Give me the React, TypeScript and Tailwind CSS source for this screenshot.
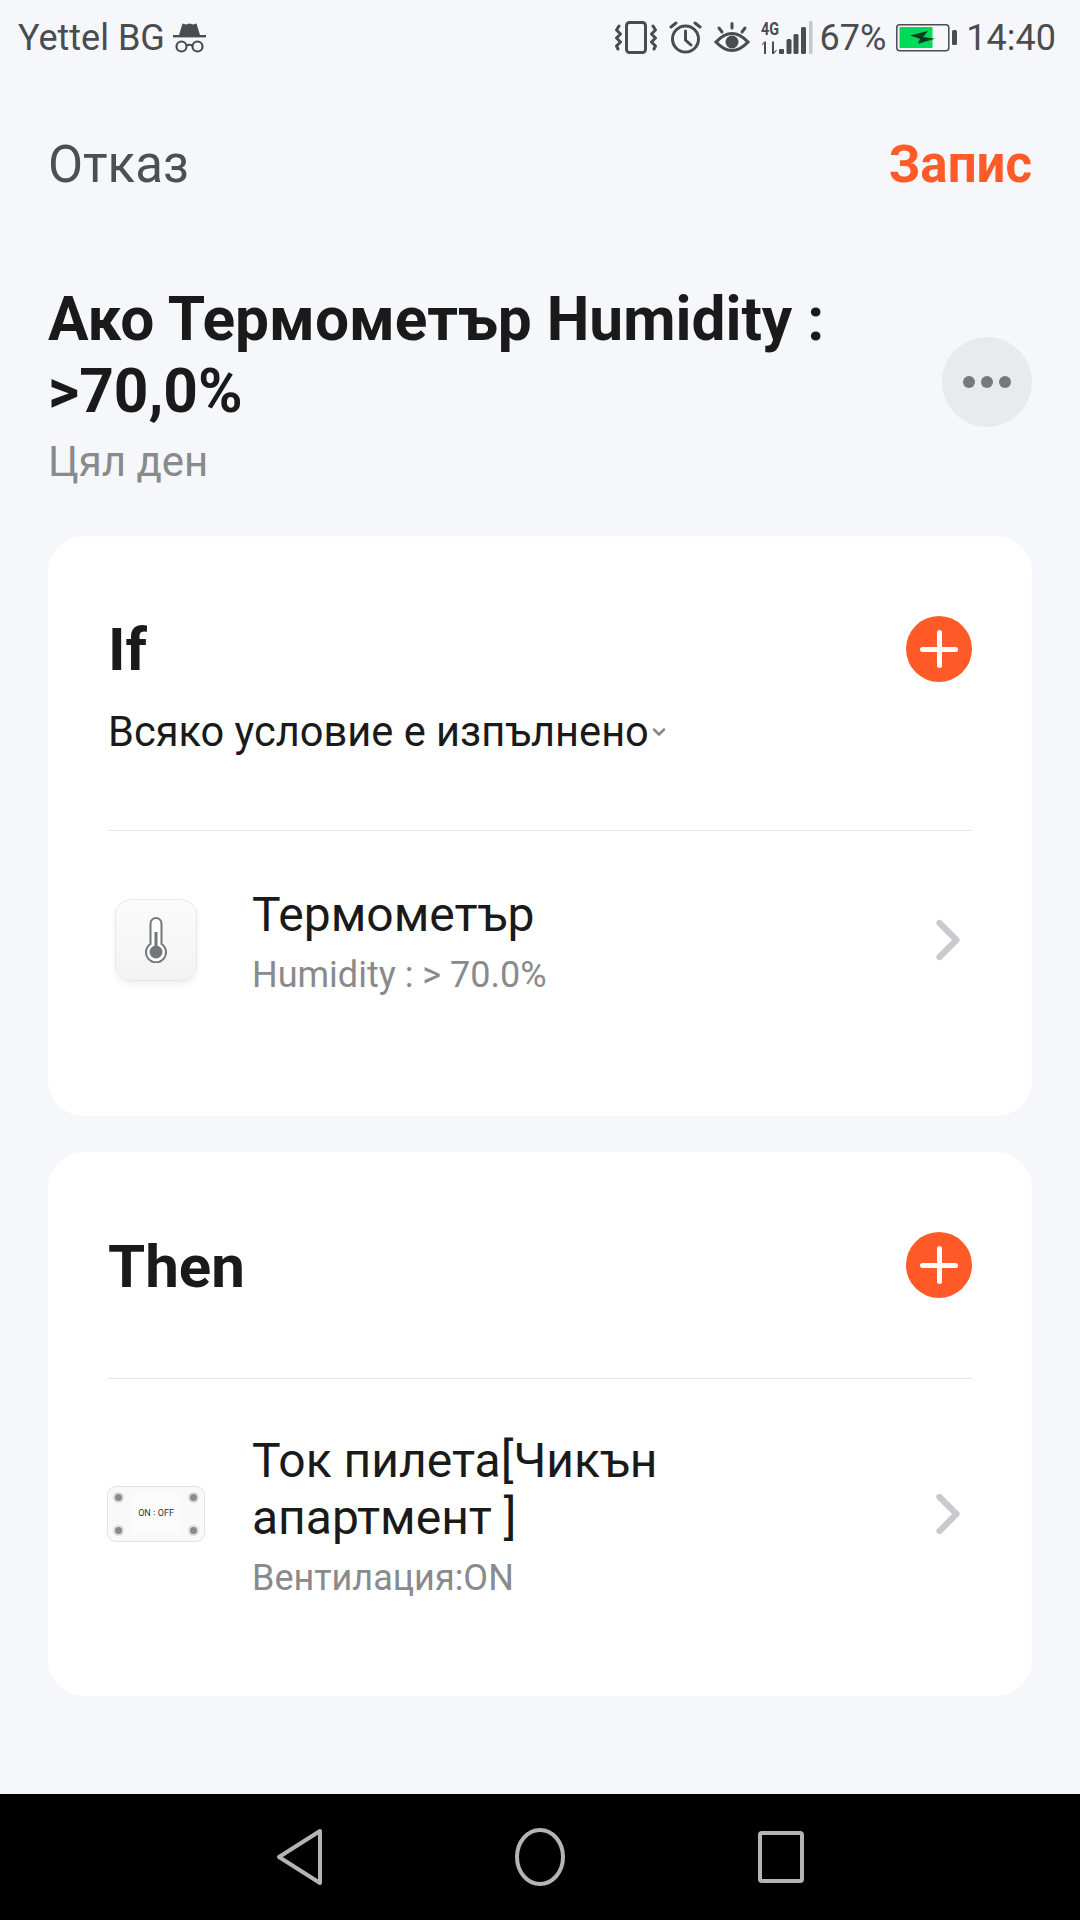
import { ChevronDown, ChevronRight } from "lucide-react";

const font = { fontFamily: "Roboto, sans-serif" };

function IncognitoIcon() {
  return (
    <svg width="33" height="31" viewBox="0 0 33 31" fill="none" className="text-[#4a4c50]">
      <path d="M6 13 L9.500 1.500 L13 2.500 L16.500 1.500 L20 2.500 L23.500 1.500 L27 13 Z" fill="currentColor" />
      <rect x="0" y="13" width="33" height="2.400" fill="currentColor" />
      <circle cx="8.500" cy="24.500" r="5" stroke="currentColor" strokeWidth="2.200" />
      <circle cx="24.500" cy="24.500" r="5" stroke="currentColor" strokeWidth="2.200" />
      <path d="M13.500 23.500 Q16.500 22 19.500 23.500" stroke="currentColor" strokeWidth="2" />
    </svg>
  );
}

function VibrateIcon() {
  return (
    <svg width="42" height="33" viewBox="0 0 42 33" fill="none" stroke="#4a4c50" strokeWidth="3" strokeLinecap="round" strokeLinejoin="round">
      <rect x="11.500" y="1.500" width="19" height="30" rx="3" />
      <path d="M4 5 L1.500 9 L5.500 13 L1.500 17 L5.500 21 L1.500 25 L3 28" />
      <path d="M38 5 L40.500 9 L36.500 13 L40.500 17 L36.500 21 L40.500 25 L39 28" />
    </svg>
  );
}

function AlarmIcon() {
  return (
    <svg width="33" height="33" viewBox="0 0 33 33" fill="none" stroke="#4a4c50" strokeWidth="3" strokeLinecap="round">
      <circle cx="16.500" cy="18" r="13" />
      <path d="M16.500 10 V19 L22 24" />
      <path d="M2 6 L7 2 M31 6 L26 2" />
    </svg>
  );
}

function EyeIcon() {
  return (
    <svg width="36" height="32" viewBox="0 0 36 32" fill="none" stroke="#4a4c50" strokeWidth="3" strokeLinecap="round">
      <path d="M2 20 Q18 3 34 20 Q18 37 2 20 Z" strokeWidth="3.200" />
      <circle cx="18" cy="20" r="6.500" fill="#4a4c50" stroke="none" />
      <path d="M18 1.500 V6 M5 6 L8 10 M31 6 L28 10" />
    </svg>
  );
}

function SignalIcon() {
  return (
    <svg width="52" height="41" viewBox="0 -4 52 41">
      <text x="0" y="14" fontSize="18" fontWeight="700" fill="#4a4c50" textLength="18" lengthAdjust="spacingAndGlyphs" style={{ fontFamily: "Roboto, sans-serif" }}>
        4G
      </text>
      <g fill="#4a4c50">
        <path d="M3 33 V22 L1 24.500 V23 L3.500 20.500 H5 V33 Z" />
        <path d="M11 20.500 H13 V31 L15.500 28.500 V30 L12.500 33 H11 Z" />
        <rect x="18" y="28" width="5" height="5" rx="1" />
        <rect x="25.500" y="18" width="5" height="15" rx="1.500" />
        <rect x="32.500" y="13" width="5" height="20" rx="1.500" />
        <rect x="40" y="6" width="5" height="27" rx="1.500" />
      </g>
      <rect x="48" y="0" width="3.500" height="33" rx="1" fill="#c6c8cc" />
    </svg>
  );
}

function BatteryIcon() {
  return (
    <svg width="61" height="28" viewBox="0 0 61 28">
      <rect x="0.800" y="0.800" width="52" height="26" rx="3" fill="none" stroke="#4a4c50" strokeWidth="1.500" />
      <rect x="3.500" y="3" width="33" height="21" rx="1" fill="#00d95a" />
      <path d="M14 11.500 L32 7 L27 13 L39 14.700 L22 19.700 L24 14.700 Z" fill="#0a3a22" />
      <rect x="56" y="6" width="5" height="15" rx="1.500" fill="#4a4c50" />
    </svg>
  );
}

function StatusBar() {
  return (
    <div className="flex h-[75px] items-center justify-between pl-[18px] pr-[24px] text-[36px] text-[#4a4c50]">
      <div className="flex items-center gap-[8px]">
        <span>Yettel BG</span>
        <IncognitoIcon />
      </div>
      <div className="flex items-center">
        <VibrateIcon />
        <div className="ml-[12px]">
          <AlarmIcon />
        </div>
        <div className="ml-[12px]">
          <EyeIcon />
        </div>
        <div className="ml-[11px]">
          <SignalIcon />
        </div>
        <span className="ml-[7px]">67%</span>
        <div className="ml-[10px]">
          <BatteryIcon />
        </div>
        <span className="ml-[9px]">14:40</span>
      </div>
    </div>
  );
}

function PlusButton() {
  return (
    <div className="relative h-[66px] w-[66px] shrink-0 rounded-full bg-[#ff5a28]">
      <div className="absolute left-[14px] top-[30.500px] h-[5px] w-[38px] rounded-full bg-white" />
      <div className="absolute left-[30.500px] top-[14px] h-[38px] w-[5px] rounded-full bg-white" />
    </div>
  );
}

function ThermoImage() {
  return (
    <div className="flex h-[82px] w-[82px] items-center justify-center rounded-[16px] border border-[#e8e8e8] bg-gradient-to-b from-[#fbfbfb] to-[#f3f3f3] shadow-[0_4px_6px_rgba(0,0,0,0.06)]">
      <svg width="22" height="46" viewBox="0 0 22 46" fill="none">
        <path d="M5.500 27 V6.500 a5.500 5.500 0 0 1 11 0 V27 a10 10 0 1 1 -11 0 Z" stroke="#70787c" strokeWidth="2" fill="white" />
        <rect x="9.500" y="15" width="3" height="18" fill="#70787c" />
        <circle cx="11" cy="35" r="6.500" fill="#70787c" />
      </svg>
    </div>
  );
}

function SwitchImage() {
  const screw = "h-[7px] w-[7px] rounded-full bg-[#8a8a8a] ring-2 ring-[#dcdcdc]";
  return (
    <div className="relative flex h-[56px] w-[98px] items-center justify-center rounded-[9px] border border-[#e2e2e2] bg-[#f9f9f9]">
      <div className="flex h-[40px] w-[48px] items-center justify-center bg-[#fcfcfc] text-[9px] whitespace-nowrap text-[#333]">ON ꞉ OFF</div>
      <div className={`absolute left-[7px] top-[7px] ${screw}`} />
      <div className={`absolute right-[7px] top-[7px] ${screw}`} />
      <div className={`absolute bottom-[7px] left-[7px] ${screw}`} />
      <div className={`absolute bottom-[7px] right-[7px] ${screw}`} />
    </div>
  );
}

export default function App() {
  return (
    <div className="flex h-[1920px] w-[1080px] flex-col overflow-hidden bg-[#f6f7fb]" style={font}>
      <StatusBar />

      <div className="mt-[58px] flex items-center justify-between px-[48px] text-[51px] leading-[64px]">
        <span className="text-[#4d4f53]">Отказ</span>
        <span className="font-bold text-[#ff5a28]">Запис</span>
      </div>

      <div className="mt-[87px] flex items-center justify-between px-[48px]">
        <div className="w-[800px]">
          <div className="text-[60.400px] leading-[72px] font-bold text-[#1a1a1a]">Ако Термометър Humidity : &gt;70,0%</div>
          <div className="mt-[11px] text-[42px] leading-[46px] text-[#888a8c]">Цял ден</div>
        </div>
        <div className="mb-[6px] flex h-[90px] w-[90px] items-center justify-center gap-[6px] rounded-full bg-[#e9eaee]">
          <div className="h-[12px] w-[12px] rounded-full bg-[#77787c]" />
          <div className="h-[12px] w-[12px] rounded-full bg-[#77787c]" />
          <div className="h-[12px] w-[12px] rounded-full bg-[#77787c]" />
        </div>
      </div>

      <div className="mx-[48px] mt-[51px] h-[580px] rounded-[36px] bg-white px-[60px]">
        <div className="flex items-center justify-between pt-[80px]">
          <span className="mt-[2px] text-[60px] leading-[60px] font-bold text-[#1a1a1a]">If</span>
          <PlusButton />
        </div>
        <div className="mt-[25px] flex h-[50px] items-center text-[41.600px] text-[#1a1a1a]">
          Всяко условие е изпълнено
          <ChevronDown size={20} strokeWidth={3} className="text-[#888]" />
        </div>
        <div className="mt-[73px] h-px bg-[#e6e7ea]" />
        <div className="mt-[54px] flex items-center">
          <div className="ml-[7px] mb-[2px] w-[137px]">
            <ThermoImage />
          </div>
          <div className="flex-1 pt-[1px]">
            <div className="text-[48px] leading-[58px] text-[#1a1a1a]">Термометър</div>
            <div className="mt-[10px] text-[36px] leading-[42px] text-[#888a8c]">Humidity : &gt; 70.0%</div>
          </div>
          <ChevronRight size={68} strokeWidth={2.200} className="mr-[-10px] mb-[2px] text-[#c8c9cc]" />
        </div>
      </div>

      <div className="mx-[48px] mt-[36px] h-[544px] rounded-[36px] bg-white px-[60px]">
        <div className="flex items-center justify-between pt-[80px]">
          <span className="mt-[4px] text-[60px] leading-[60px] font-bold text-[#1a1a1a]">Then</span>
          <PlusButton />
        </div>
        <div className="mt-[80px] h-px bg-[#e6e7ea]" />
        <div className="mt-[53px] flex items-center">
          <div className="ml-[-1px] mb-[3px] w-[145px]">
            <SwitchImage />
          </div>
          <div className="flex-1">
            <div className="w-[440px] text-[48px] leading-[57px] text-[#1a1a1a]">Ток пилета[Чикън апартмент ]</div>
            <div className="mt-[11px] text-[36px] leading-[42px] text-[#888a8c]">Вентилация:ON</div>
          </div>
          <ChevronRight size={68} strokeWidth={2.200} className="mr-[-10px] mb-[3px] text-[#c8c9cc]" />
        </div>
      </div>

      <div className="mt-auto flex h-[126px] items-center justify-between bg-black px-[276px]">
        <svg width="46" height="58" viewBox="0 0 46 58" fill="none" stroke="#b4b4b4" strokeWidth="4" strokeLinejoin="round">
          <path d="M44 3 L3 29 L44 55 Z" />
        </svg>
        <svg width="50" height="58" viewBox="0 0 50 58" fill="none" stroke="#b4b4b4" strokeWidth="4">
          <ellipse cx="25" cy="29" rx="23" ry="27" />
        </svg>
        <svg width="46" height="52" viewBox="0 0 46 52" fill="none" stroke="#b4b4b4" strokeWidth="4" strokeLinejoin="round">
          <rect x="2" y="2" width="42" height="48" rx="2" />
        </svg>
      </div>
    </div>
  );
}
